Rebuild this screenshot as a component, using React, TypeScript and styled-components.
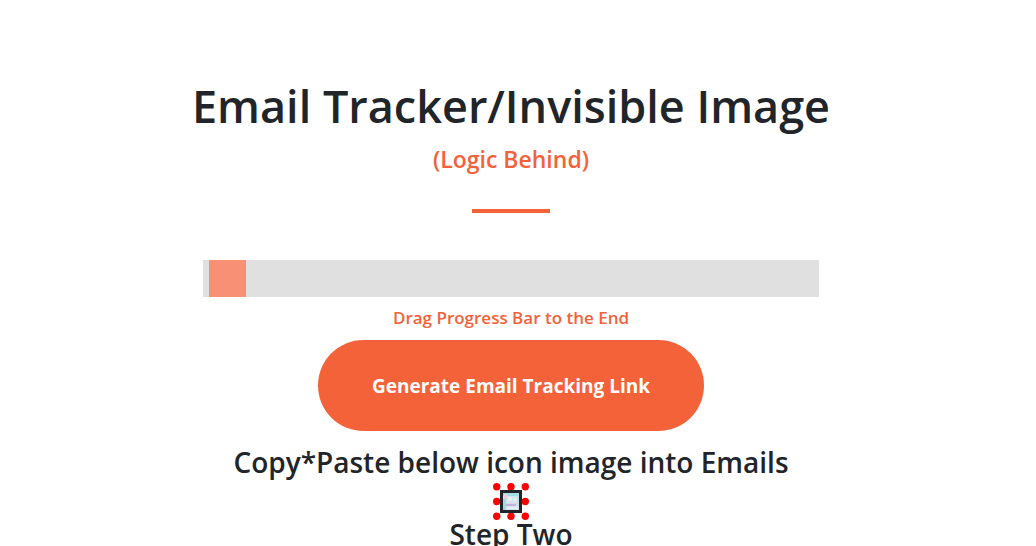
import React, { useState } from "react";
import styled, { createGlobalStyle } from "styled-components";

const GlobalStyle = createGlobalStyle`
  * { box-sizing: border-box; }
  body {
    margin: 0;
    background: #fff;
    color: #212529;
    font-family: "Segoe UI", "Open Sans", "Noto Sans", sans-serif;
  }
`;
const Page = styled.main`
  display: flex;
  flex-direction: column;
  align-items: center;
  padding: 76px 14px 0 0;
  text-align: center;
`;
const Title = styled.h1`
  margin: 0;
  font-size: 45px;
  line-height: 60px;
  font-weight: 600;
`;
const Subtitle = styled.p`
  margin: 7px 0 0;
  font-size: 23px;
  line-height: 32px;
  font-weight: 600;
  color: #f4623a;
`;
const Divider = styled.hr`
  width: 78px;
  height: 4px;
  margin: 34px 0 47px;
  border: 0;
  background: #f4623a;
`;
const Slider = styled.input`
  appearance: none;
  width: calc(60% + 3px);
  height: 37px;
  margin: 0;
  padding: 0 6px;
  background: #d3d3d3;
  opacity: 0.7;
  &::-webkit-slider-thumb {
    appearance: none;
    width: 37px;
    height: 37px;
    background: #f4623a;
  }
`;
const Hint = styled.label`
  margin: 7px 0 9px;
  font-size: 17px;
  line-height: 27px;
  font-weight: 600;
  color: #f4623a;
`;
const Generate = styled.button`
  padding: 33px 54px 31px;
  border: 0;
  border-radius: 160px;
  background: #f4623a;
  color: #fff;
  font: inherit;
  font-size: 19px;
  line-height: 27px;
  font-weight: 700;
`;
const Steps = styled.section`
  display: flex;
  flex-direction: column;
  align-items: center;
  padding-top: 13px;
`;
const Step = styled.h2`
  margin: 0;
  font-size: 28px;
  line-height: 36px;
  font-weight: 600;
`;
const Handles = styled.svg`
  display: block;
  margin-top: 3px;
  margin-bottom: -4px;
`;

const dotColumns = [3.7, 18, 32.3];
const dotRows = [3.7, 18.5, 33.3];

function TrackingIcon() {
  return (
    <Handles width="36" height="37" viewBox="0 0 36 37" role="img" aria-label="Tracking icon">
      {dotRows.map((y) =>
        dotColumns.map((x) => <circle key={`${x}-${y}`} cx={x} cy={y} r="3.7" fill="#f00" />)
      )}
      <rect x="7" y="7" width="22" height="23" fill="#212529" />
      <rect x="10" y="10" width="16" height="17" fill="#d3e6ec" />
      <rect x="10" y="10" width="16" height="3" fill="#a0dfe3" />
      <rect x="11" y="11" width="3" height="5" fill="#e3d0dd" />
      <rect x="10" y="16" width="3" height="11" fill="#a0dae0" />
      <rect x="15" y="14" width="4" height="4" fill="#e6f1f3" />
      <rect x="20" y="15" width="4" height="3" fill="#dff0f1" />
      <rect x="13" y="20" width="11" height="1" fill="#e9cfe0" />
      <rect x="13" y="21" width="10" height="2" fill="#c2b2dc" />
      <rect x="14" y="24" width="10" height="2" fill="#e6ebef" />
      <rect x="24" y="13" width="2" height="10" fill="#bfe1e7" />
    </Handles>
  );
}

export default function App() {
  const [value, setValue] = useState(0);
  return (
    <>
      <GlobalStyle />
      <Page>
        <Title>Email Tracker/Invisible Image</Title>
        <Subtitle>(Logic Behind)</Subtitle>
        <Divider />
        <Slider id="progress" type="range" value={value} onChange={(e) => setValue(Number(e.target.value))} />
        <Hint htmlFor="progress">Drag Progress Bar to the End</Hint>
        <Generate type="button">Generate Email Tracking Link</Generate>
        <Steps>
          <Step>Copy*Paste below icon image into Emails</Step>
          <TrackingIcon />
          <Step>Step Two</Step>
        </Steps>
      </Page>
    </>
  );
}
